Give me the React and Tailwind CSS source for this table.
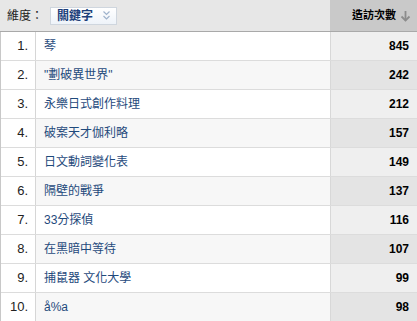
import React from 'react';

const rows = [
  { kw: '琴', visits: 845 },
  { kw: '"劃破異世界"', visits: 242 },
  { kw: '永樂日式創作料理', visits: 212 },
  { kw: '破案天才伽利略', visits: 157 },
  { kw: '日文動詞變化表', visits: 149 },
  { kw: '隔壁的戰爭', visits: 137 },
  { kw: '33分探偵', visits: 116 },
  { kw: '在黑暗中等待', visits: 107 },
  { kw: '捕鼠器 文化大學', visits: 99 },
  { kw: 'å%a', visits: 98 },
];

export default function App() {
  return (
    <div
      className="w-[417px] h-[321px] bg-white overflow-hidden text-[13px]"
      style={{ fontFamily: '"Liberation Sans", "Noto Sans CJK TC", sans-serif' }}
    >
      {/* header */}
      <div className="flex h-[32px] border-b border-[#a9a9a9] bg-[#e7e7e7]">
        <div className="flex-1 flex items-center pl-[7px] gap-[7px]">
          <span className="text-[#222] text-[12px]">維度：</span>
          <div className="flex items-center h-[18px] pl-[6px] pr-[5px] gap-[9px] border border-[#cfd6de] bg-gradient-to-b from-white to-[#eef3f9]">
            <span className="font-bold text-[#1c3f7a] text-[12px]">關鍵字</span>
            <svg width="9" height="11" viewBox="0 0 9 11" fill="none" stroke="#9fb3cc" strokeWidth="1.2">
              <path d="M1.5 1.5 L4.5 4.5 L7.5 1.5" />
              <path d="M1.5 6 L4.5 9 L7.5 6" />
            </svg>
          </div>
        </div>
        <div className="w-[87px] bg-[#c9c9c9] flex items-center justify-end pr-[6px] gap-[4px]">
          <span className="font-bold text-black text-[11px]">造訪次數</span>
          <svg width="11" height="12" viewBox="0 0 11 12" fill="none" stroke="#8c8c8c" strokeWidth="1.8">
            <path d="M5.5 1 V10.5" />
            <path d="M1.5 6.5 L5.5 10.5 L9.5 6.5" />
          </svg>
        </div>
      </div>

      {/* rows */}
      <div className="border-l border-[#c8c8c8]">
        {rows.map((r, i) => (
          <div key={i} className="flex h-[29px] border-b border-[#dcdcdc]">
            <div className="w-[35px] border-r border-[#d6d6d6] flex items-center justify-end pr-[7px] text-[#222]">
              {i + 1}.
            </div>
            <div className={`flex-1 flex items-center pl-[8px] text-[12px] text-[#1f4a7c] ${i % 2 ? 'bg-[#f7f7f7]' : 'bg-white'}`}>
              {r.kw}
            </div>
            <div
              className={`w-[87px] border-l border-[#d8d8d8] flex items-center justify-end pr-[8px] font-bold text-[12px] text-black ${i % 2 ? 'bg-[#e4e4e4]' : 'bg-[#efefef]'}`}
            >
              {r.visits}
            </div>
          </div>
        ))}
      </div>
    </div>
  );
}
